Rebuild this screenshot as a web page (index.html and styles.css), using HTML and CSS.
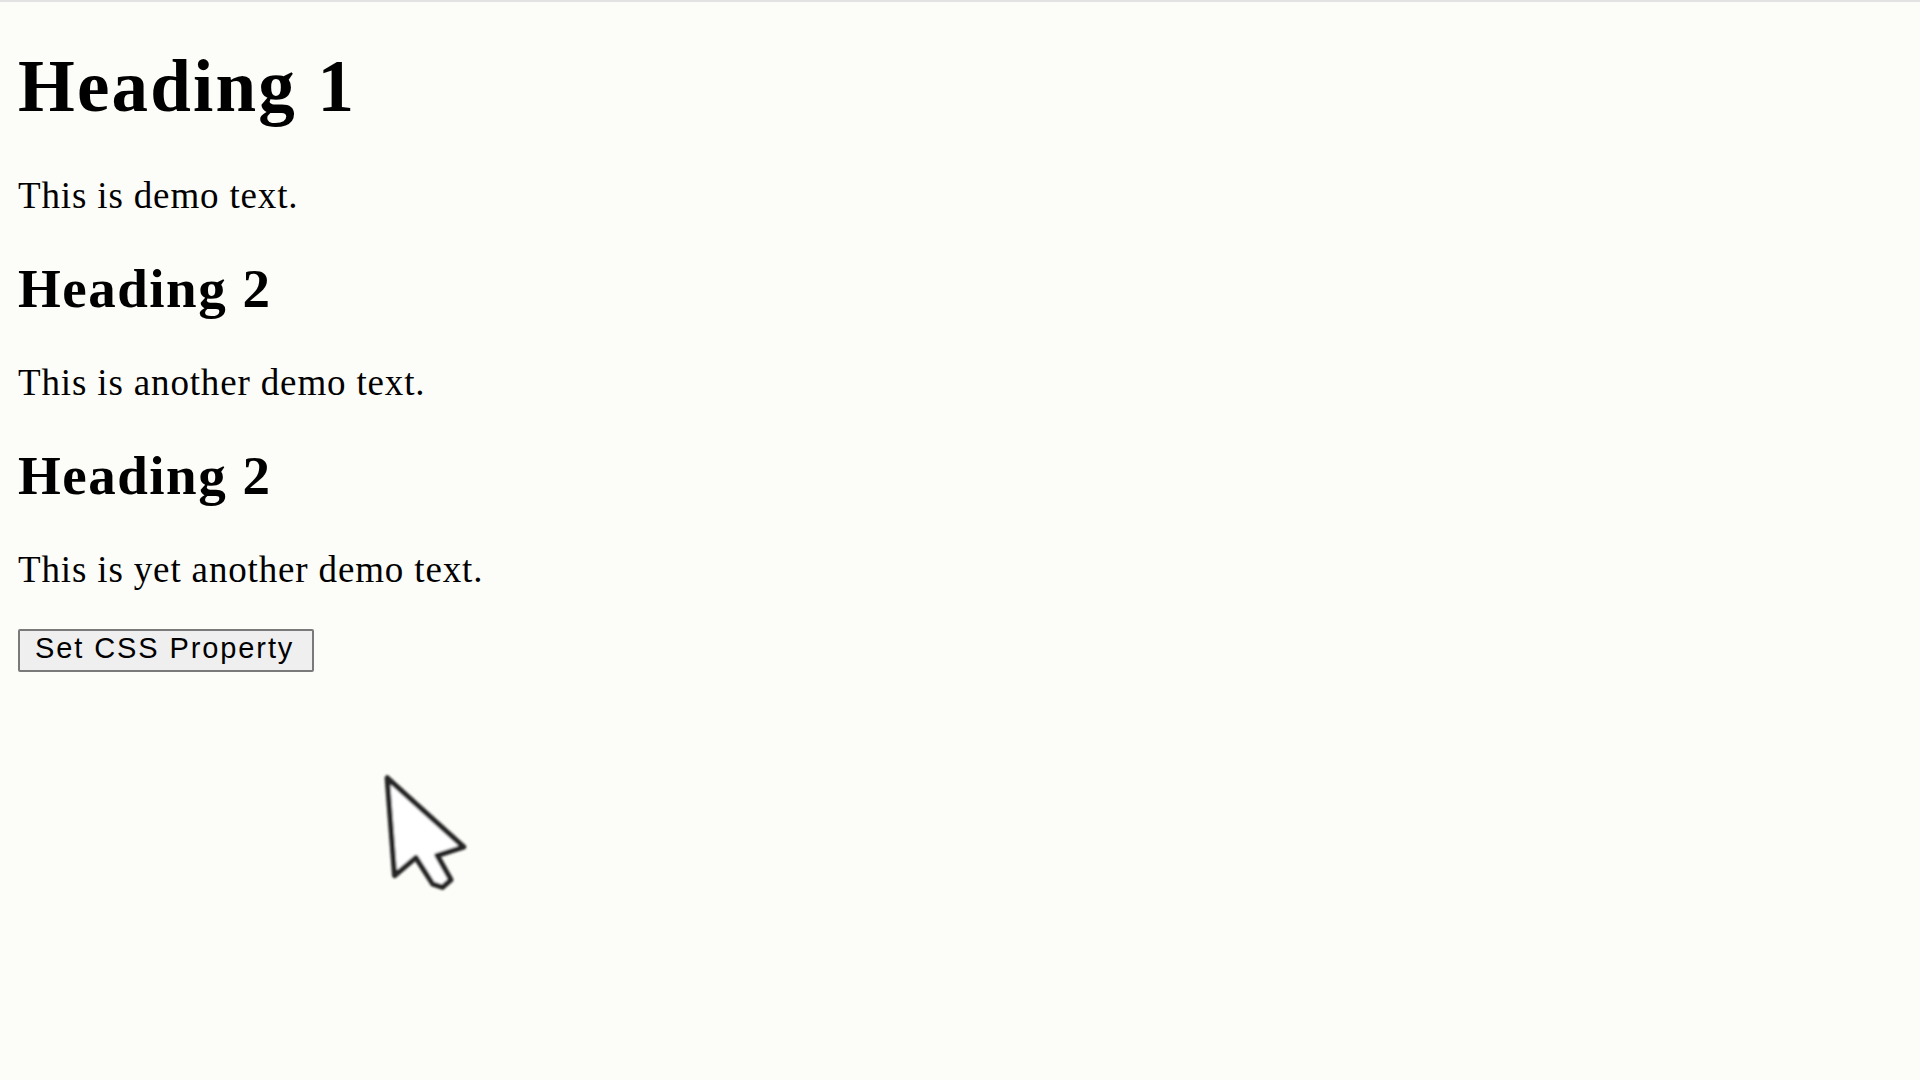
FILE: index.html
```html
<!DOCTYPE html>
<html lang="en">
<head>
<meta charset="utf-8">
<title>Set CSS Property</title>
<link rel="stylesheet" href="styles.css">
</head>
<body>
<div class="page">
  <h1 class="h1">Heading 1</h1>
  <p class="text">This is demo text.</p>
  <h2 class="h2">Heading 2</h2>
  <p class="text">This is another demo text.</p>
  <h2 class="h2">Heading 2</h2>
  <p class="text">This is yet another demo text.</p>
  <div class="actions">
    <button class="btn" type="button">Set CSS Property</button>
  </div>
</div>
<svg class="cursor" viewBox="0 0 110 130" width="117" height="138" aria-hidden="true">
  <defs>
    <filter id="soft" x="-10%" y="-10%" width="120%" height="120%">
      <feGaussianBlur stdDeviation="0.8"/>
    </filter>
  </defs>
  <path d="M18 15 L25 107 L45 90 L61 115 L70 118 L78 111 L65 88 L90 80 Z" fill="#ffffff" stroke="#262626" stroke-width="5" stroke-linejoin="round" filter="url(#soft)"/>
</svg>
</body>
</html>
```
FILE: styles.css
```css
html, body {
  margin: 0;
  padding: 0;
}

body {
  min-height: 100vh;
  background-color: #fcfcf8;
  background-image: linear-gradient(#e2e2e2 0, #e2e2e2 2px, transparent 2px);
  background-repeat: no-repeat;
  color: #000;
  font-family: "Liberation Serif", "Times New Roman", serif;
  position: relative;
}

.page {
  padding: 45px 18px 0 18px;
}

.h1 {
  margin: 0 0 46px 0;
  font-size: 73px;
  line-height: 84px;
  font-weight: bold;
  letter-spacing: 2.2px;
}

.h2 {
  margin: 40px 0 42px 0;
  font-size: 55px;
  line-height: 63px;
  font-weight: bold;
  letter-spacing: 1.5px;
}

.text {
  margin: 0;
  font-size: 37px;
  line-height: 42px;
  letter-spacing: 0.85px;
}

.actions {
  margin-top: 38px;
}

.btn {
  margin: 0;
  padding: 0 18px 4px 15px;
  font-family: "Liberation Sans", Arial, sans-serif;
  font-size: 29px;
  line-height: 35px;
  letter-spacing: 1.9px;
  color: #000;
  background: #efefef;
  border: 2px solid #7a7a7a;
  border-radius: 2px;
}

.cursor {
  position: absolute;
  left: 368px;
  top: 762px;
}
```
